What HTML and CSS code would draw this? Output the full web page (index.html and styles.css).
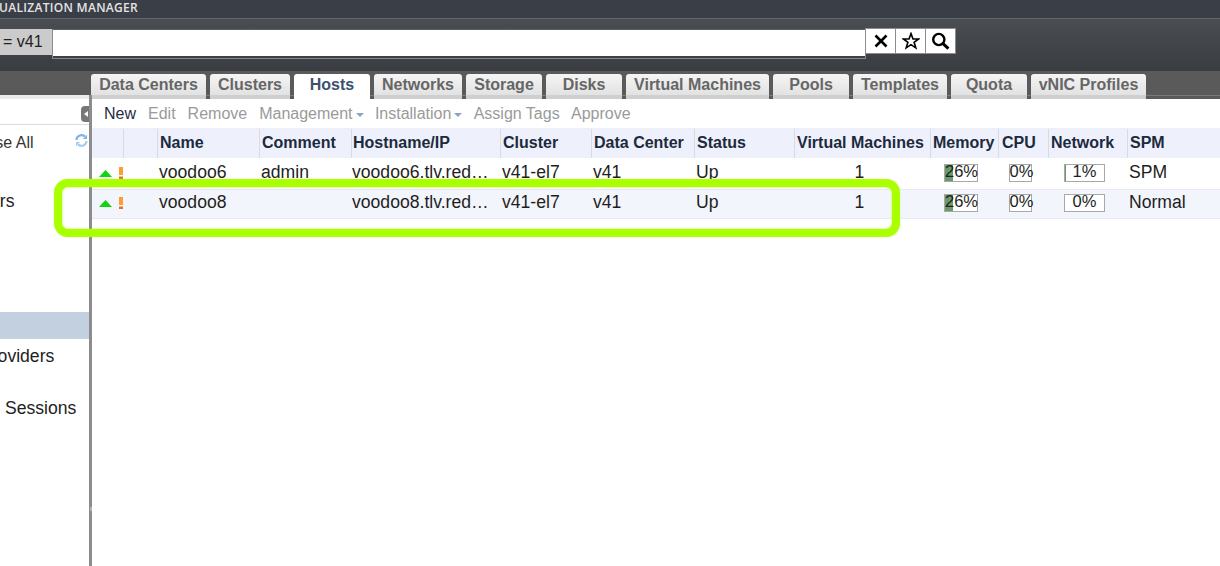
FILE: index.html
```html
<!DOCTYPE html>
<html lang="en">
<head>
<meta charset="utf-8">
<title>Virtualization Manager - Hosts</title>
<link rel="stylesheet" href="styles.css">
</head>
<body>
<div class="page">
  <header class="brand"><span class="brand-text">UALIZATION MANAGER</span></header>

  <div class="search-row">
    <div class="search-prefix">= v41</div>
    <div class="search-box"><div class="search-input"></div></div>
    <div class="search-btns">
      <div class="search-btn">
        <svg width="14" height="14" viewBox="0 0 14 14"><path d="M1.5 1.5L12.5 12.5M12.5 1.5L1.5 12.5" stroke="#000" stroke-width="2.6" fill="none"/></svg>
      </div>
      <div class="search-btn">
        <svg width="18" height="18" viewBox="0 0 18 18"><path d="M9 1.6L11 7H16.6L12.1 10.3L13.8 15.9L9 12.6L4.2 15.9L5.9 10.3L1.4 7H7Z" stroke="#000" stroke-width="1.6" fill="#fff" stroke-linejoin="miter"/></svg>
      </div>
      <div class="search-btn">
        <svg width="19" height="18" viewBox="0 0 19 18"><circle cx="7.8" cy="7.5" r="5.6" stroke="#000" stroke-width="2.4" fill="none"/><path d="M12 11.6L17.4 16.6" stroke="#000" stroke-width="3" fill="none"/></svg>
      </div>
    </div>
  </div>

  <nav class="tab-band">
    <div class="tab tab-dc">Data Centers</div>
    <div class="tab tab-cl">Clusters</div>
    <div class="tab tab-ho active">Hosts</div>
    <div class="tab tab-ne">Networks</div>
    <div class="tab tab-st">Storage</div>
    <div class="tab tab-di">Disks</div>
    <div class="tab tab-vm">Virtual Machines</div>
    <div class="tab tab-po">Pools</div>
    <div class="tab tab-te">Templates</div>
    <div class="tab tab-qu">Quota</div>
    <div class="tab tab-vn">vNIC Profiles</div>
  </nav>

  <main class="main">
    <aside class="sidebar">
      <div class="side-top">
        <div class="collapse-btn"><span class="collapse-arrow"></span></div>
      </div>
      <div class="side-head">
        <span class="side-label side-all">Collapse All</span>
        <svg class="refresh" width="13" height="13" viewBox="0 0 13 13"><path d="M1.5 6A5 5 0 0 1 10 2.6" stroke="#7fb2ea" stroke-width="2.2" fill="none"/><path d="M12 .8V5H8Z" fill="#7fb2ea"/><path d="M11.5 7A5 5 0 0 1 3 10.4" stroke="#a5cdf2" stroke-width="2.2" fill="none"/><path d="M1 12.2V8H5Z" fill="#a5cdf2"/></svg>
      </div>
      <div class="side-item side-clusters"><span>Clusters</span></div>
      <div class="side-selected"></div>
      <div class="side-item side-providers"><span>Providers</span></div>
      <div class="side-item side-sessions"><span>Sessions</span></div>
    </aside>
    <div class="splitter"><span class="grip"></span></div>

    <section class="content">
      <div class="toolbar">
        <span class="tool on">New</span>
        <span class="tool">Edit</span>
        <span class="tool">Remove</span>
        <span class="tool">Management<i class="caret"></i></span>
        <span class="tool">Installation<i class="caret"></i></span>
        <span class="tool">Assign Tags</span>
        <span class="tool">Approve</span>
      </div>

      <div class="row head">
        <div class="c"></div><div class="c"></div>
        <div class="c">Name</div><div class="c">Comment</div><div class="c">Hostname/IP</div>
        <div class="c">Cluster</div><div class="c">Data Center</div><div class="c">Status</div>
        <div class="c">Virtual Machines</div><div class="c">Memory</div><div class="c">CPU</div>
        <div class="c">Network</div><div class="c">SPM</div>
      </div>

      <div class="row body">
        <div class="c icons">
          <svg class="up" width="13" height="7" viewBox="0 0 13 7"><path d="M6.5 0L13 7H0Z" fill="#0fd40f"/></svg>
          <svg class="warn" width="4" height="12" viewBox="0 0 4 12"><rect width="4" height="8" fill="#ff9d33"/><rect y="9.5" width="4" height="2.5" fill="#e8701a"/></svg>
        </div>
        <div class="c"></div>
        <div class="c">voodoo6</div><div class="c">admin</div>
        <div class="c ell">voodoo6.tlv.redhat.com</div>
        <div class="c">v41-el7</div><div class="c">v41</div><div class="c">Up</div>
        <div class="c num">1</div>
        <div class="c bar-cell"><div class="bar bar-mem"><div class="fill" style="width:26%"></div><span class="bar-text">26%</span></div></div>
        <div class="c bar-cell"><div class="bar bar-cpu"><div class="fill" style="width:0%"></div><span class="bar-text">0%</span></div></div>
        <div class="c bar-cell"><div class="bar bar-net"><div class="fill" style="width:1%"></div><span class="bar-text">1%</span></div></div>
        <div class="c">SPM</div>
      </div>

      <div class="row body alt">
        <div class="c icons">
          <svg class="up" width="13" height="7" viewBox="0 0 13 7"><path d="M6.5 0L13 7H0Z" fill="#0fd40f"/></svg>
          <svg class="warn" width="4" height="12" viewBox="0 0 4 12"><rect width="4" height="8" fill="#ff9d33"/><rect y="9.5" width="4" height="2.5" fill="#e8701a"/></svg>
        </div>
        <div class="c"></div>
        <div class="c">voodoo8</div><div class="c"></div>
        <div class="c ell">voodoo8.tlv.redhat.com</div>
        <div class="c">v41-el7</div><div class="c">v41</div><div class="c">Up</div>
        <div class="c num">1</div>
        <div class="c bar-cell"><div class="bar bar-mem"><div class="fill" style="width:26%"></div><span class="bar-text">26%</span></div></div>
        <div class="c bar-cell"><div class="bar bar-cpu"><div class="fill" style="width:0%"></div><span class="bar-text">0%</span></div></div>
        <div class="c bar-cell"><div class="bar bar-net"><div class="fill" style="width:0%"></div><span class="bar-text">0%</span></div></div>
        <div class="c">Normal</div>
      </div>
    </section>
  </main>

  <div class="highlight"></div>
</div>
</body>
</html>
```

FILE: styles.css
```css
* { box-sizing: border-box; }
html, body { margin: 0; height: 100%; overflow: hidden; background: #fff; }
body { font-family: "Liberation Sans", Arial, sans-serif; font-size: 16px; color: #1c1c1c; }
.page { position: relative; width: 1220px; height: 566px; display: flex; flex-direction: column; overflow: hidden; }

/* brand bar */
.brand { height: 19px; background: #3a3e46; border-bottom: 1px solid #62666b; overflow: hidden; flex: none; }
.brand-text { display: block; margin-left: -1px; font-family: "Open Sans", sans-serif; font-size: 12px; font-weight: 600; line-height: 15px; letter-spacing: .3px; color: #e4e4e4; white-space: nowrap; }

/* search row */
.search-row { height: 52px; flex: none; display: flex; align-items: flex-start; padding-top: 10px; background: linear-gradient(#4a4e52, #393d41); }
.search-prefix { width: 52px; height: 26px; padding-left: 3px; background: #cbcbcb; line-height: 26px; color: #222; white-space: nowrap; }
.search-box { width: 814px; height: 30px; border: 1px solid #85898d; border-top-color: #5c6064; border-left-color: #8a8e92; }
.search-input { height: 26px; background: #fff; }
.search-btns { display: flex; height: 26px; margin-left: -1px; margin-top: -1px; }
.search-btn { width: 30px; height: 26px; background: #fff; border: 1px solid #8d8d8d; border-left-width: 0; display: flex; align-items: center; justify-content: center; }
.search-btn:first-child { width: 31px; border-left-width: 1px; }

/* tabs */
.tab-band { position: relative; height: 28px; flex: none; background: #5a5a5a; display: flex; gap: 4px; padding: 3px 0 0 91px; }
.tab-band::before { content: ""; position: absolute; left: 89px; right: 0; top: 24px; height: 1px; background: #7a7a7a; }
.tab-band::after { content: ""; position: absolute; left: 0; width: 89px; top: 24px; height: 4px; background: #ececec; }
.tab { position: relative; z-index: 1; height: 25px; text-align: center; font-weight: 700; line-height: 22px; color: #666; background: linear-gradient(#f5f5f5 0, #e2e2e2 21px, #cfcfcf 21px, #cfcfcf 100%); border-radius: 3px 3px 0 0; white-space: nowrap; overflow: hidden; }
.tab.active { background: #fff; color: #3c5070; }
.tab-dc { width: 115px; } .tab-cl { width: 80px; } .tab-ho { width: 76px; } .tab-ne { width: 88px; }
.tab-st { width: 76px; } .tab-di { width: 76px; } .tab-vm { width: 143px; } .tab-po { width: 76px; }
.tab-te { width: 94px; } .tab-qu { width: 76px; } .tab-vn { width: 115px; }

/* main */
.main { flex: 1; display: flex; min-height: 0; }
.sidebar { width: 89px; flex: none; position: relative; overflow: hidden; background: #fff; font-size: 17.6px; }
.side-top { height: 26px; border-bottom: 1px solid #dcdcdc; position: relative; }
.collapse-btn { position: absolute; right: -1px; top: 7px; width: 9px; height: 16px; background: #777; border-radius: 4px 0 0 4px; display: flex; align-items: center; justify-content: center; }
.collapse-arrow { width: 0; height: 0; border: 3px solid transparent; border-left-width: 0; border-right: 4px solid #fff; }
.side-head { position: relative; height: 36px; }
.side-label { position: absolute; left: -50px; top: 8px; white-space: nowrap; line-height: 20px; color: #333; font-size: 16px; }
.refresh { position: absolute; left: 75px; top: 9px; }
.side-item { white-space: nowrap; line-height: 20px; color: #222; }
.side-clusters { margin: 30px 0 0 -50px; }
.side-selected { height: 27px; margin-top: 101px; background: #c3d0e0; }
.side-providers { margin: 7px 0 0 -20px; }
.side-sessions { margin: 32px 0 0 5px; }

.splitter { width: 3px; flex: none; background: #8c8c8c; position: relative; margin-top: -4px; z-index: 1; }
.grip { position: absolute; left: 1px; top: 412px; width: 2px; height: 4px; background: #b5b5b5; }

.content { flex: 1; min-width: 0; }
.toolbar { height: 30px; display: flex; gap: 12px; padding-left: 12px; line-height: 29px; color: #9a9a9a; border-bottom: 1px solid #eceff7; }
.tool { white-space: nowrap; }
.tool:nth-child(n+5) { margin-left: -.7px; }
.tool.on { color: #1f2d44; }
.caret { display: inline-block; width: 0; height: 0; margin-left: 3px; vertical-align: 2px; border: 4px solid transparent; border-bottom-width: 0; border-top: 4px solid #8ea3bf; }

/* table */
.row { display: grid; grid-template-columns: 32px 34px 102px 92px 149px 91px 103px 100px 136px 68px 50px 79px 1fr; height: 30px; }
.head { background: #eef1fb; font-weight: 700; color: #1c2a3e; height: 29px; margin-bottom: 1px; }
.head .c { border-right: 1px solid #d6dbe8; padding-left: 2px; line-height: 27px; white-space: nowrap; }
.head .c:nth-child(n+3) { margin-left: -1px; padding-left: 3px; }
.head .c:nth-child(5) { padding-left: 2px; }
.head .c:nth-child(11) { padding-left: 4px; }
.head .c:last-child { border-right: 0; }
.body .c { padding-left: 1px; font-size: 17.6px; line-height: 26px; white-space: nowrap; color: #1e1e1e; min-width: 0; }
.alt { background: #f2f5fb; border-top: 1px solid #e6e9ef; border-bottom: 1px solid #e6e9ef; }
.alt .c { line-height: 24px; }
.icons { position: relative; }
.up { position: absolute; left: 7px; top: 11px; }
.warn { position: absolute; left: 27px; top: 8px; }
.alt .up { top: 10px; }
.alt .warn { top: 7px; }
.body .ell { overflow: hidden; text-overflow: ellipsis; padding-left: 0; padding-right: 9px; }
.num { text-align: center; padding-right: 8px; }
.body .bar-cell { display: flex; justify-content: center; padding-left: 0; padding-right: 8px; padding-top: 5px; }
.alt .bar-cell { padding-top: 4px; }
.bar { position: relative; height: 18px; border: 1px solid #a8a8a8; background: #fff; text-align: center; font-size: 16.5px; line-height: 12px; }
.bar-mem { width: 34px; } .bar-cpu { width: 23px; } .bar-net { width: 41px; }
.fill { position: absolute; left: 0; top: 0; bottom: 0; background: #6a9a6a; }
.bar-text { position: relative; }

/* annotation */
.highlight { position: absolute; left: 54px; top: 179px; width: 846px; height: 58px; border: 8px solid #aaff00; border-radius: 14px; box-shadow: 0 0 1px #aaff00, inset 0 0 2px #aaff00; z-index: 5; }
```
